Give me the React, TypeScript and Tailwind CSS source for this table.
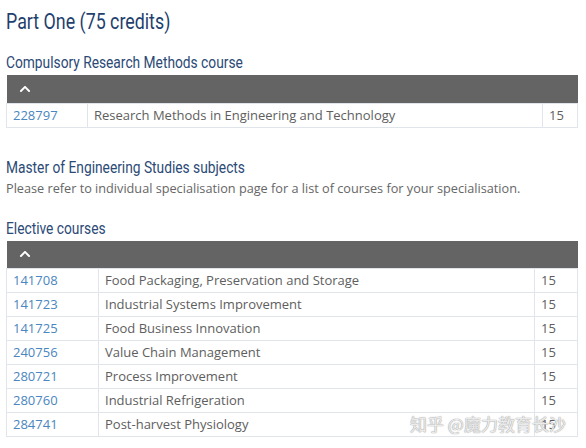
import React from "react";
import { FaChevronUp } from "react-icons/fa";

const compulsory = [
  { code: "228797", title: "Research Methods in Engineering and Technology", credits: "15" },
];

const electives = [
  { code: "141708", title: "Food Packaging, Preservation and Storage", credits: "15" },
  { code: "141723", title: "Industrial Systems Improvement", credits: "15" },
  { code: "141725", title: "Food Business Innovation", credits: "15" },
  { code: "240756", title: "Value Chain Management", credits: "15" },
  { code: "280721", title: "Process Improvement", credits: "15" },
  { code: "280760", title: "Industrial Refrigeration", credits: "15" },
  { code: "284741", title: "Post-harvest Physiology", credits: "15" },
];

type Course = { code: string; title: string; credits: string };

const CourseTable = ({ rows, codeW, creditW }: { rows: Course[]; codeW: string; creditW: string }) => (
  <table className="w-full border-collapse text-[13px] font-['Open_Sans',sans-serif] text-[#5e5e5e]">
    <thead>
      <tr className="bg-[#646464]">
        <th colSpan={3} className="h-[28px] pl-[12px] text-left align-middle">
          <FaChevronUp className="text-white text-[12px]" />
        </th>
      </tr>
    </thead>
    <tbody>
      {rows.map((r) => (
        <tr key={r.code} className="h-[24px]">
          <td className={`${codeW} border border-[#dfe5eb] pl-[6px] leading-none text-[#4a86c0]`}>{r.code}</td>
          <td className="border border-[#dfe5eb] pl-[6px] leading-none">{r.title}</td>
          <td className={`${creditW} border border-[#dfe5eb] pl-[6px] leading-none`}>{r.credits}</td>
        </tr>
      ))}
    </tbody>
  </table>
);

// condensed heading face: Roboto squeezed to the narrow width of the original
const Heading = ({ children, className }: { children: React.ReactNode; className: string }) => (
  <div className={`origin-left whitespace-nowrap font-['Roboto',sans-serif] text-[#2b4a76] ${className}`}>
    {children}
  </div>
);

export default function App() {
  return (
    <div className="relative w-[586px] h-[448px] bg-white overflow-hidden px-[6px] pt-[8px]">
      <Heading className="scale-x-[0.81] text-[22px] leading-[28px] !text-[#1f3f6e]">
        Part One (75 credits)
      </Heading>

      <Heading className="scale-x-[0.86] mt-[17px] mb-[2px] text-[16px] leading-[20px]">
        Compulsory Research Methods course
      </Heading>
      <div className="w-[572px]">
        <CourseTable rows={compulsory} codeW="w-[81px]" creditW="w-[35px]" />
      </div>

      <Heading className="scale-x-[0.86] mt-[30px] text-[16px] leading-[20px]">
        Master of Engineering Studies subjects
      </Heading>
      <p className="mt-[1px] text-[12.7px] leading-[18px] text-[#666] font-['Open_Sans',sans-serif]">
        Please refer to individual specialisation page for a list of courses for your specialisation.
      </p>

      <Heading className="scale-x-[0.86] mt-[22px] mb-[2px] text-[16px] leading-[20px]">
        Elective courses
      </Heading>
      <div className="w-[572px]">
        <CourseTable rows={electives} codeW="w-[92px]" creditW="w-[43px]" />
      </div>

      <div className="absolute left-[410px] top-[412px] whitespace-nowrap text-[17px] leading-[24px] text-white/80 font-['Noto_Sans_CJK_SC',sans-serif] [text-shadow:0_0_1px_#999,0_0_1px_#999]">
        知乎 @魔力教育长沙
      </div>
    </div>
  );
}
